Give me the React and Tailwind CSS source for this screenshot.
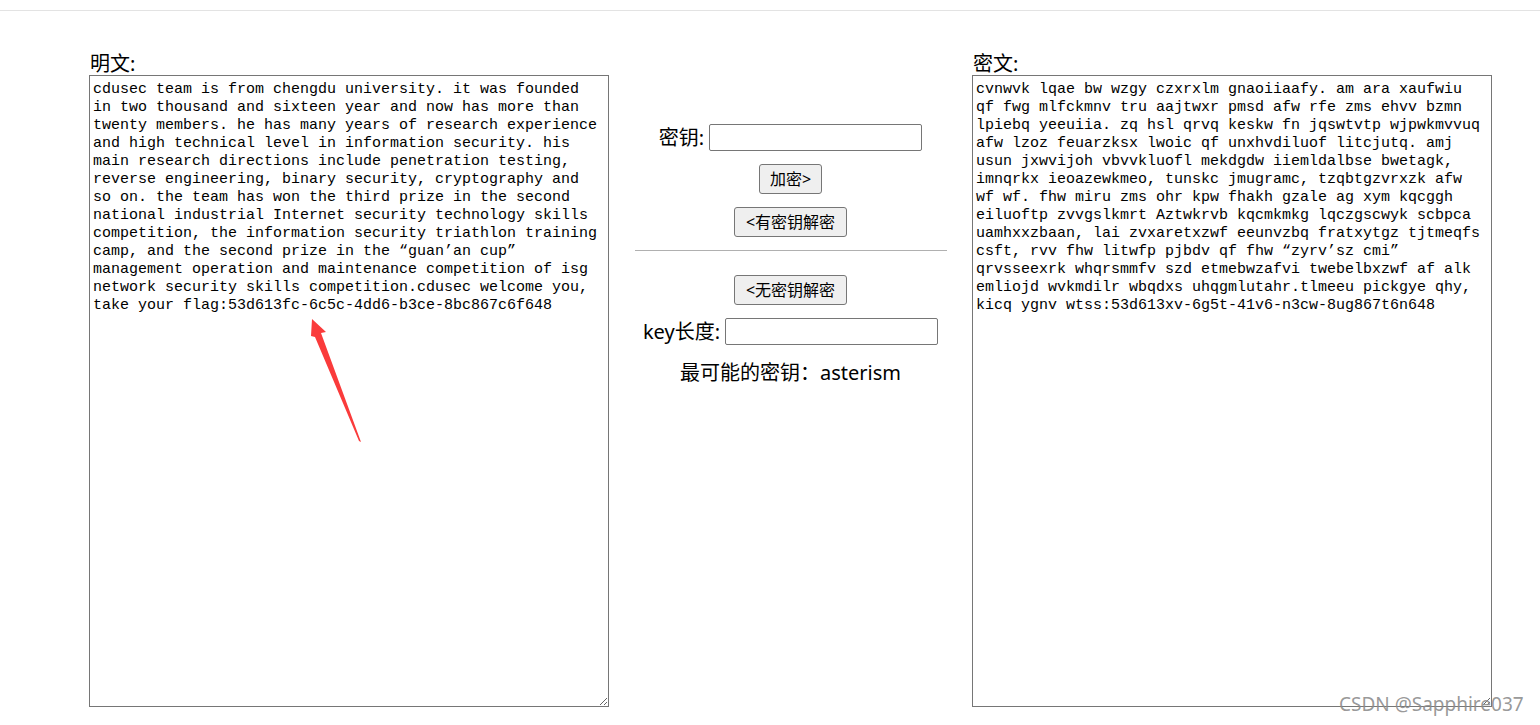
const PLAIN =
  "cdusec team is from chengdu university. it was founded in two thousand and sixteen year and now has more than twenty members. he has many years of research experience and high technical level in information security. his main research directions include penetration testing, reverse engineering, binary security, cryptography and so on. the team has won the third prize in the second national industrial Internet security technology skills competition, the information security triathlon training camp, and the second prize in the \u201Cguan\u2019an cup\u201D management operation and maintenance competition of isg network security skills competition.cdusec welcome you, take your flag:53d613fc-6c5c-4dd6-b3ce-8bc867c6f648";

const CIPHER =
  "cvnwvk lqae bw wzgy czxrxlm gnaoiiaafy. am ara xaufwiu qf fwg mlfckmnv tru aajtwxr pmsd afw rfe zms ehvv bzmn lpiebq yeeuiia. zq hsl qrvq keskw fn jqswtvtp wjpwkmvvuq afw lzoz feuarzksx lwoic qf unxhvdiluof litcjutq. amj usun jxwvijoh vbvvkluofl mekdgdw iiemldalbse bwetagk, imnqrkx ieoazewkmeo, tunskc jmugramc, tzqbtgzvrxzk afw wf wf. fhw miru zms ohr kpw fhakh gzale ag xym kqcggh eiluoftp zvvgslkmrt Aztwkrvb kqcmkmkg lqczgscwyk scbpca uamhxxzbaan, lai zvxaretxzwf eeunvzbq fratxytgz tjtmeqfs csft, rvv fhw litwfp pjbdv qf fhw \u201Czyrv\u2019sz cmi\u201D qrvsseexrk whqrsmmfv szd etmebwzafvi twebelbxzwf af alk emliojd wvkmdilr wbqdxs uhqgmlutahr.tlmeeu pickgye qhy, kicq ygnv wtss:53d613xv-6g5t-41v6-n3cw-8ug867t6n648";

const textareaCls =
  "w-[520px] h-[632px] border border-[#767676] bg-white pl-[3px] pr-[3px] pt-[5px] pb-[2px] font-['Liberation_Mono',monospace] text-[15px] leading-[18px] text-black resize outline-none";

const btnCls =
  "h-[30px] flex items-center justify-center bg-[#efefef] border border-[#767676] rounded-[3px] text-[16px] text-black";

function Pane({ label, value }) {
  return (
    <div className="flex flex-col w-[520px]">
      <div className="h-[23px] leading-[23px] text-[20px] pl-[1px]">{label}</div>
      <textarea className={textareaCls} defaultValue={value} spellCheck={false} />
    </div>
  );
}

export default function App() {
  return (
    <div className="relative w-[1540px] h-[725px] overflow-hidden bg-white text-black font-['Noto_Sans','Noto_Sans_CJK_SC',sans-serif]">
      <div className="h-[11px] border-b border-[#e3e3e3]" />

      <div className="flex pt-[41px] pl-[89px]">
        <Pane label="明文:" value={PLAIN} />

        <div className="w-[363px] flex flex-col items-center">
          <div className="mt-[72px] h-[27px] flex items-center gap-[5px] text-[20px]">
            <span>密钥:</span>
            <input className="w-[213px] h-[27px] border border-[#767676] rounded-[2px] bg-white outline-none" />
          </div>
          <button className={btnCls + " mt-[13px] w-[63px]"}>加密&gt;</button>
          <button className={btnCls + " mt-[13px] w-[113px]"}>&lt;有密钥解密</button>
          <div className="mt-[13px] w-[312px] border-t border-[#b0b0b0]" />
          <button className={btnCls + " mt-[24px] w-[113px]"}>&lt;无密钥解密</button>
          <div className="mt-[13px] h-[27px] flex items-center gap-[5px] text-[20px]">
            <span>key长度:</span>
            <input className="w-[213px] h-[27px] border border-[#767676] rounded-[2px] bg-white outline-none" />
          </div>
          <div className="mt-[14px] h-[28px] leading-[28px] text-[20px]">最可能的密钥：asterism</div>
        </div>

        <Pane label="密文:" value={CIPHER} />
      </div>

      {/* annotation arrow */}
      <svg className="absolute left-0 top-0 pointer-events-none" width="1540" height="725">
        <polygon
          points="312,319 326,332 321,333 361,442 359,441 315,337 311,336"
          fill="#fa3b3b"
        />
      </svg>

      <div className="absolute left-[1339px] top-[695px] text-[19px] leading-[19px] text-[#8c8c8c]/90 font-['Noto_Sans',sans-serif] pointer-events-none">
        CSDN @Sapphire037
      </div>
    </div>
  );
}
